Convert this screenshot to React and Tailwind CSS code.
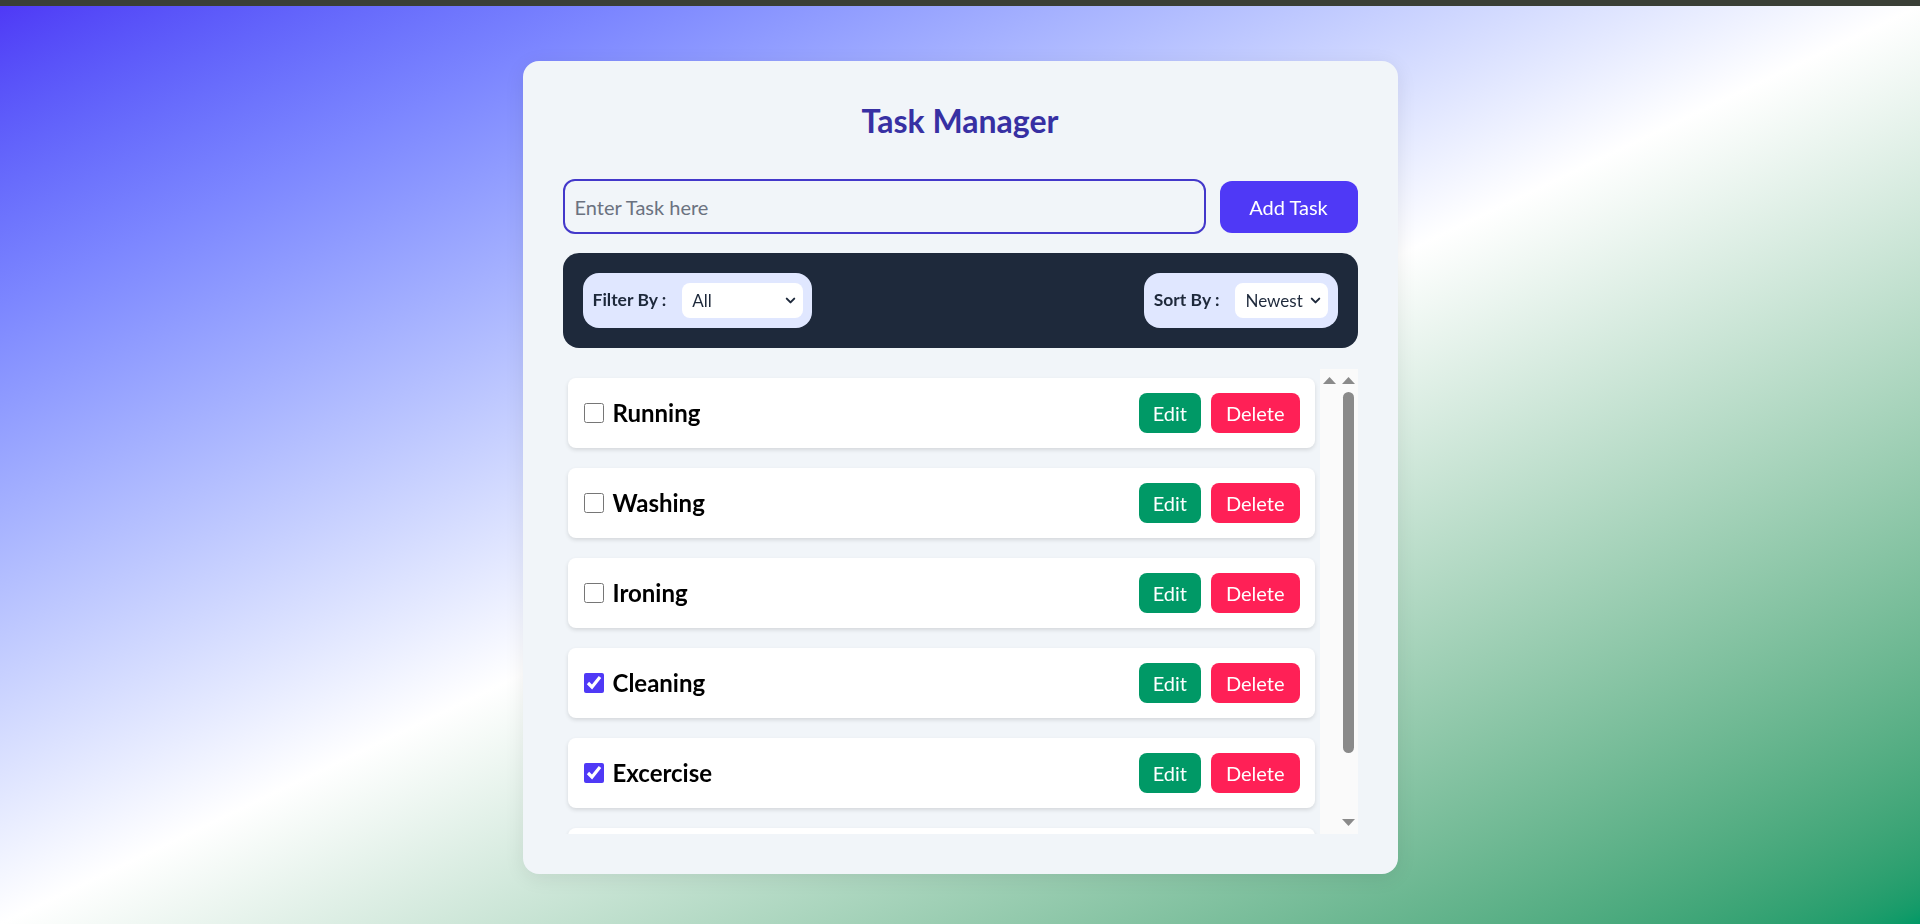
import React, { useState } from "react";
import { ChevronDown } from "lucide-react";

const initialTasks = [
  { id: 1, text: "Running", done: false },
  { id: 2, text: "Washing", done: false },
  { id: 3, text: "Ironing", done: false },
  { id: 4, text: "Cleaning", done: true },
  { id: 5, text: "Excercise", done: true },
];

const Arrow = ({ down }) => (
  <svg width="13" height="7" viewBox="0 0 13 7" className="shrink-0">
    <polygon points={down ? "0,0 13,0 6.5,7" : "0,7 13,7 6.5,0"} fill="#8a8a8a" />
  </svg>
);

const App = () => {
  const [tasks, setTasks] = useState(initialTasks);
  const [text, setText] = useState("");

  const toggle = (id) =>
    setTasks((t) => t.map((x) => (x.id === id ? { ...x, done: !x.done } : x)));

  return (
    <div className="min-h-screen flex flex-col font-['Lato',sans-serif]">
      {/* top strip */}
      <div className="h-[6px] bg-[#3a3f37]" />

      <div className="flex-1 flex flex-col items-center pt-[55px] bg-linear-to-br from-[#4f39f6] via-white to-[#009966]">
        <div className="w-[875px] bg-[#f1f5f9] rounded-2xl px-10 pt-10 pb-10 shadow-[0_4px_20px_rgba(0,0,0,0.08)]">
          {/* Header */}
          <h1 className="text-center text-[32px] leading-[38px] font-bold text-[#3730a3] mt-[1px] mb-[39px]">
            Task Manager
          </h1>

          {/* Add row */}
          <div className="flex items-center gap-[14px] h-[55px]">
            <input
              type="text"
              autoFocus
              value={text}
              onChange={(e) => setText(e.target.value)}
              placeholder="Enter Task here"
              className="flex-1 h-[55px] border-2 border-[#4338ca] rounded-xl bg-transparent px-[10px] text-xl text-gray-800 placeholder:text-[#6b7280] outline-none"
            />
            <button className="w-[138px] h-[52px] bg-[#4f39f6] text-white text-xl rounded-xl">
              Add Task
            </button>
          </div>

          {/* Filter bar */}
          <div className="mt-[19px] bg-[#1e293b] rounded-2xl p-5 flex items-center justify-between">
            <div className="flex items-center gap-4 bg-[#e0e7ff] rounded-2xl h-[55px] pl-2.5 pr-[9px]">
              <span className="text-[17.5px] font-bold text-[#1e293b]">Filter By :</span>
              <div className="relative">
                <select className="appearance-none w-[121px] h-[35px] bg-white rounded-lg pl-2.5 text-[17px] text-[#1e293b] outline-none">
                  <option>All</option>
                  <option>Completed</option>
                  <option>Pending</option>
                </select>
                <ChevronDown
                  size={15}
                  strokeWidth={3.2}
                  className="absolute right-[5px] top-[10px] text-[#1e293b] pointer-events-none"
                />
              </div>
            </div>

            <div className="flex items-center gap-[15px] bg-[#e0e7ff] rounded-2xl h-[55px] pl-2.5 pr-[10px]">
              <span className="text-[17.5px] font-bold text-[#1e293b]">Sort By :</span>
              <div className="relative">
                <select className="appearance-none w-[93px] h-[35px] bg-white rounded-lg pl-[11px] text-[17px] text-[#1e293b] outline-none">
                  <option>Newest</option>
                  <option>Oldest</option>
                </select>
                <ChevronDown
                  size={15}
                  strokeWidth={3.2}
                  className="absolute right-[5px] top-[10px] text-[#1e293b] pointer-events-none"
                />
              </div>
            </div>
          </div>

          {/* Task list */}
          <div className="mt-[21px] h-[465px] flex">
            <div className="flex-1 overflow-hidden flex flex-col gap-5 pt-[9px] pl-[5px] pr-[5px]">
              {tasks.map((t) => (
                <div
                  key={t.id}
                  className="shrink-0 h-[70px] bg-white rounded-lg pl-4 pr-[15px] flex items-center justify-between shadow-[0_2px_4px_rgba(0,0,0,0.12)]"
                >
                  <label className="flex items-center gap-[9px]">
                    <input
                      type="checkbox"
                      checked={t.done}
                      onChange={() => toggle(t.id)}
                      className="w-5 h-5 accent-[#4f39f6]"
                    />
                    <span className="text-2xl font-bold text-black">{t.text}</span>
                  </label>
                  <div className="flex items-center gap-[10px]">
                    <button className="h-10 px-[14px] bg-[#009966] text-white text-xl rounded-lg">
                      Edit
                    </button>
                    <button className="h-10 px-[15px] bg-[#ff2056] text-white text-xl rounded-lg">
                      Delete
                    </button>
                  </div>
                </div>
              ))}
              {/* next row, scrolled out of view */}
              <div className="shrink-0 h-[70px] bg-white rounded-lg shadow-[0_2px_4px_rgba(0,0,0,0.12)]" />
            </div>

            {/* scrollbars */}
            <div className="w-[38px] bg-[#fafafa] flex">
              <div className="w-[19px] flex flex-col items-center pt-2">
                <Arrow />
              </div>
              <div className="w-[19px] flex flex-col items-center pt-2 pb-2">
                <Arrow />
                <div className="mt-2 w-[11px] h-[361px] rounded-full bg-[#8a8a8a]" />
                <div className="flex-1" />
                <Arrow down />
              </div>
            </div>
          </div>
        </div>
      </div>
    </div>
  );
};

export default App;
